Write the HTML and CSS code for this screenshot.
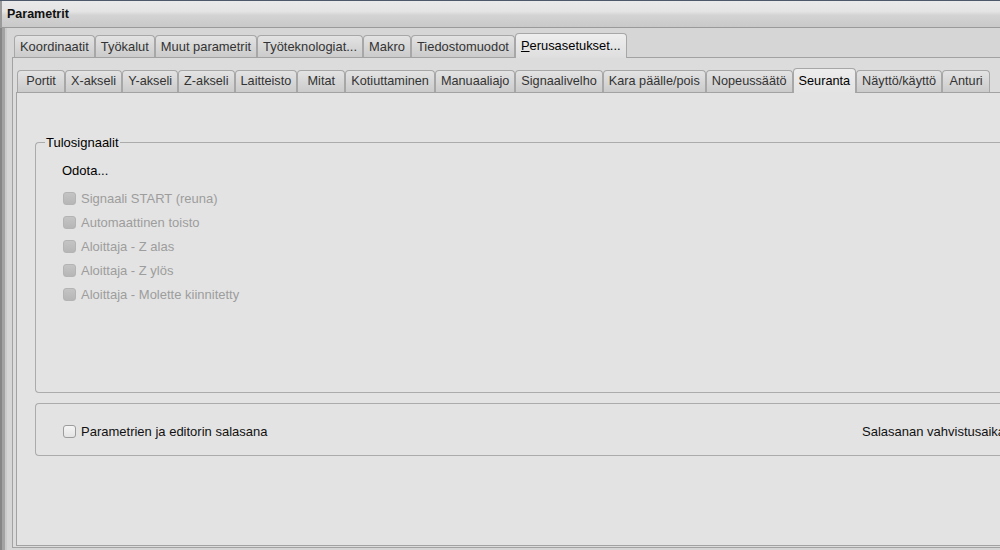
FILE: index.html
```html
<!DOCTYPE html>
<html lang="fi">
<head>
  <meta charset="UTF-8" />
  <title>Parametrit</title>
  <link rel="stylesheet" href="styles.css">
</head>
<body>
  <div class="window">
    <div class="titlebar">Parametrit</div>

    <div class="frame">
      <div class="tabs outer-tabs">
        <div class="tab">Koordinaatit</div>
        <div class="tab">Työkalut</div>
        <div class="tab">Muut parametrit</div>
        <div class="tab">Työteknologiat...</div>
        <div class="tab">Makro</div>
        <div class="tab">Tiedostomuodot</div>
        <div class="tab active"><u>P</u>erusasetukset...</div>
      </div>

      <div class="pane outer-pane">
        <div class="tabs inner-tabs">
          <div class="tab">Portit</div>
          <div class="tab">X-akseli</div>
          <div class="tab">Y-akseli</div>
          <div class="tab">Z-akseli</div>
          <div class="tab">Laitteisto</div>
          <div class="tab">Mitat</div>
          <div class="tab">Kotiuttaminen</div>
          <div class="tab">Manuaaliajo</div>
          <div class="tab">Signaalivelho</div>
          <div class="tab">Kara päälle/pois</div>
          <div class="tab">Nopeussäätö</div>
          <div class="tab active">Seuranta</div>
          <div class="tab">Näyttö/käyttö</div>
          <div class="tab">Anturi</div>
        </div>

        <div class="pane inner-pane">
          <div class="group group-inputs">
            <div class="group-title">Tulosignaalit</div>
            <div class="wait">Odota...</div>
            <label class="check disabled"><span class="box"></span>Signaali START (reuna)</label>
            <label class="check disabled"><span class="box"></span>Automaattinen toisto</label>
            <label class="check disabled"><span class="box"></span>Aloittaja - Z alas</label>
            <label class="check disabled"><span class="box"></span>Aloittaja - Z ylös</label>
            <label class="check disabled"><span class="box"></span>Aloittaja - Molette kiinnitetty</label>
          </div>

          <div class="group group-password">
            <div class="password-row">
              <label class="check password-check"><span class="box"></span>Parametrien ja editorin salasana</label>
              <div class="confirm-time">Salasanan vahvistusaika</div>
            </div>
          </div>
        </div>
      </div>
    </div>
  </div>
</body>
</html>
```

FILE: styles.css
```css
body {
  margin: 0;
  width: 1000px;
  height: 550px;
  overflow: hidden;
  background-color: #d6d6d6;
  font-family: "Liberation Sans", Arial, sans-serif;
  font-size: 13px;
  color: #1a1a1a;
}

.window {
  height: 550px;
  display: flex;
  flex-direction: column;
}

.titlebar {
  height: 26px;
  line-height: 26px;
  padding-left: 7px;
  border-top: 1px solid #4d586b;
  border-bottom: 1px solid #9a9a9a;
  background: linear-gradient(#e9e9e9 0%, #e4e4e4 40%, #d3d3d3 55%, #c9c9c9 100%);
  box-shadow: inset 2px 0 #9a9a9a;
  font-size: 12.5px;
  font-weight: bold;
  color: #111;
}

.frame {
  flex: 1;
  display: flex;
  flex-direction: column;
  padding: 5px 0 0 12px;
  background-color: #d6d6d6;
  box-shadow: inset 2px 0 #868686, inset 5px 0 #a3a3a3, inset 7px 0 #cbcbcb;
}

/* tabs */

.tabs {
  display: flex;
  align-items: flex-end;
  height: 24px;
}

.outer-tabs {
  padding-left: 2px;
}

.inner-tabs {
  padding-left: 1px;
}

.tab {
  box-sizing: border-box;
  flex: none;
  height: 22px;
  min-width: 48px;
  padding: 0 5px;
  line-height: 21px;
  text-align: center;
  white-space: nowrap;
  font-size: 12.9px;
  color: #333;
  border: 1px solid #a7a7a7;
  border-bottom: none;
  border-radius: 4px 4px 0 0;
  background: linear-gradient(#e3e3e3, #cbcbcb);
}

.inner-tabs .tab {
  font-size: 12.7px;
}

.tab.active {
  position: relative;
  z-index: 1;
  height: 25px;
  margin-bottom: -1px;
  line-height: 24px;
  color: #000;
  background: linear-gradient(#eeeeee, #dedede);
}

.inner-tabs .tab.active {
  background: linear-gradient(#ededed, #e3e3e3);
}

/* panes */

.pane {
  flex: 1;
  display: flex;
  flex-direction: column;
  border: 1px solid #a2a2a2;
  border-right: none;
}

.outer-pane {
  margin-bottom: 2px;
  padding: 10px 0 1px 3px;
  background-color: #dcdcdc;
}

.inner-pane {
  padding: 49px 0 0 18px;
  background-color: #e3e3e3;
}

/* group boxes */

.group {
  position: relative;
  border: 1px solid #ababab;
  border-right: none;
  border-radius: 4px 0 0 4px;
  padding-left: 26px;
}

.group-inputs {
  height: 229px;
  padding-top: 20px;
}

.group-title {
  position: absolute;
  top: -8px;
  left: 9px;
  padding: 0 1px;
  line-height: 16px;
  background-color: #e3e3e3;
  color: #000;
}

.wait {
  line-height: 16px;
  margin-bottom: 7px;
  color: #000;
}

.check {
  display: flex;
  align-items: center;
  height: 24px;
}

.box {
  box-sizing: border-box;
  width: 13px;
  height: 13px;
  margin: 0 5px 0 1px;
  border: 1px solid #9c9c9c;
  border-radius: 3px;
  background: linear-gradient(#f4f4f4, #e4e4e4);
}

.check.disabled {
  color: #9d9d9d;
}

.check.disabled .box {
  border-color: #b4b4b4;
  background: linear-gradient(#c4c4c4, #b6b6b6);
}

.group-password {
  margin-top: 10px;
  height: 36px;
  padding-top: 15px;
}

.password-row {
  display: flex;
  align-items: center;
}

.password-check {
  flex: none;
  width: 800px;
  color: #111;
}

.confirm-time {
  flex: none;
  white-space: nowrap;
  color: #111;
}
```
